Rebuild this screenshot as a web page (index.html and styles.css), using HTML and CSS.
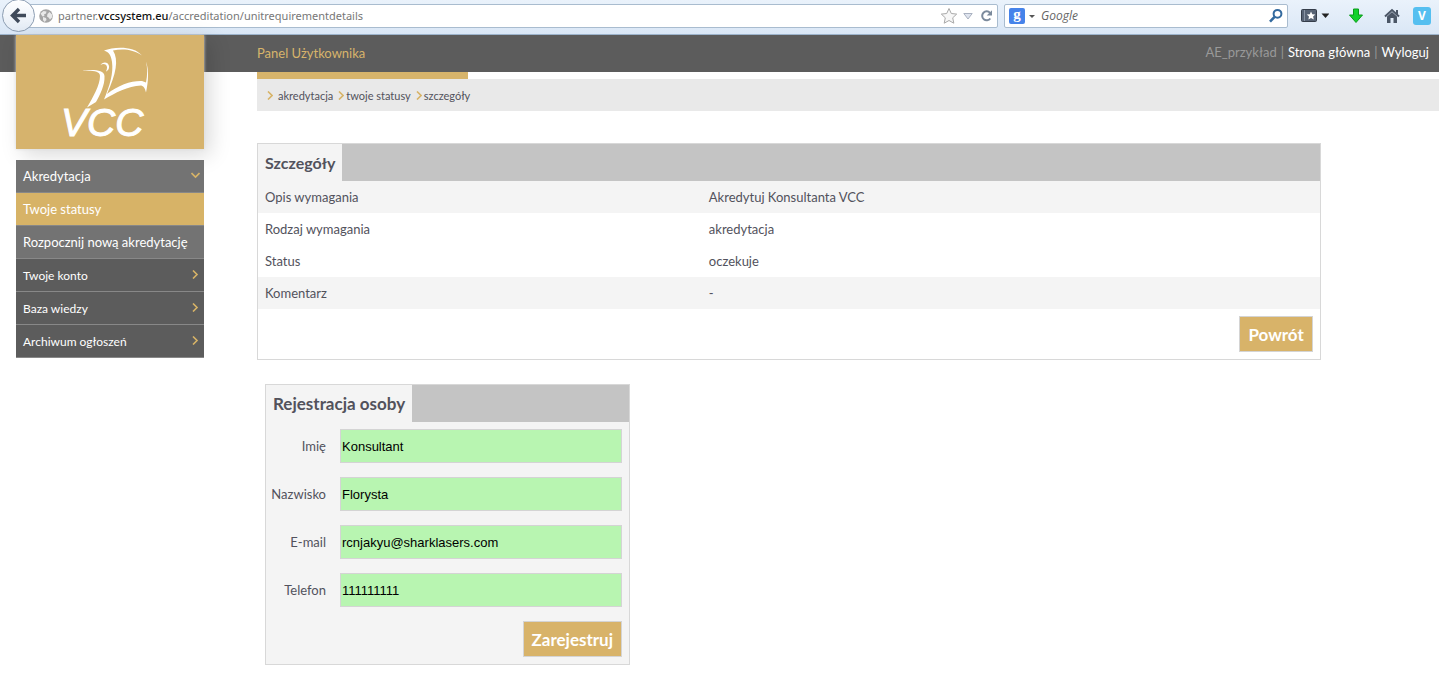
FILE: index.html
```html
<!DOCTYPE html>
<html lang="pl">
<head>
<meta charset="utf-8">
<title>VCC – Panel Użytkownika</title>
<link rel="stylesheet" href="styles.css">
</head>
<body>
<div class="browser">
  <button class="back" aria-label="Wstecz">
    <svg width="31" height="31" viewBox="0 0 31 31"><path d="M23 15.500H10M16 9l-6.500 6.500L16 22" fill="none" stroke="#3f4a5a" stroke-width="3.400"/></svg>
  </button>
  <div class="address">
    <svg class="globe" width="14" height="14" viewBox="0 0 14 14"><circle cx="7" cy="7" r="6.800" fill="#a5a5a5"/><path d="M1.500 4.500l3-2.500 3 .5-.5 2-2 1 .5 1.500-2 .5zM8.500 5l2-2 2.500 2.500v3l-2 2-1.500-2-1.500-1zM4 8l3 1 .5 2-2 2-1.500-2z" fill="#e9e9e9"/></svg>
    <div class="url">partner.<b>vccsystem.eu</b>/accreditation/unitrequirementdetails</div>
    <svg width="18" height="18" viewBox="0 0 18 18"><path d="M9 1.500l2.300 5 5.400.6-4 3.700 1.100 5.400L9 13.500l-4.800 2.700 1.100-5.400-4-3.700 5.400-.6z" fill="#f7f7f7" stroke="#a9a9a9"/></svg>
    <svg class="drop" width="10" height="18" viewBox="0 0 10 18"><path d="M.8 6.500h8.400L5 12z" fill="#dfe4ee" stroke="#a9b1c0"/></svg>
    <svg width="13" height="18" viewBox="0 0 13 18"><path d="M10 5.800A4.500 4.500 0 1 0 10.300 11.500" fill="none" stroke="#7b8a9c" stroke-width="2"/><path d="M12 3.200v5.300H6.700z" fill="#7b8a9c"/></svg>
  </div>
  <div class="search">
    <span class="engine">g</span>
    <svg width="6" height="16" viewBox="0 0 6 16"><path d="M0 7h6L3 10z" fill="#555"/></svg>
    <input class="query" type="text" placeholder="Google" aria-label="Google">
    <svg width="14" height="16" viewBox="0 0 14 16"><circle cx="8.500" cy="5.800" r="3.900" fill="none" stroke="#336a9f" stroke-width="2"/><path d="M5.600 8.800L1 13.700" stroke="#336a9f" stroke-width="2.600"/></svg>
  </div>
  <div class="tools">
    <svg width="28" height="18" viewBox="0 0 28 18"><rect x=".5" y="2.500" width="15" height="12" rx="1" fill="#566274" stroke="#353d4a"/><path d="M3.500 3v11" stroke="#8a95a5"/><path d="M10 4.500l1.300 2.700 3 .3-2.200 2 .7 3-2.800-1.500-2.600 1.500.6-3-2.200-2 3-.3z" fill="#fff"/><path d="M20.500 6.500h8L24.500 11z" fill="#222"/></svg>
    <svg class="down" width="14" height="18" viewBox="0 0 14 18"><path d="M4.500 2h5v6h4L7 15.500.5 8h4z" fill="#12d12b" stroke="#0a9c1b"/></svg>
    <svg class="home" width="16" height="18" viewBox="0 0 16 18"><path d="M1 9.500L8 3l7 6.500" fill="none" stroke="#4b5666" stroke-width="2"/><path d="M12 3h2v5l-2-2zM3 9.500l5-4.500 5 4.500V16H9.500v-5h-3v5H3z" fill="#4b5666"/></svg>
    <span class="addon">V</span>
  </div>
</div>

<header class="top">
  <div class="panel-name">Panel Użytkownika</div>
  <nav class="user"><span>AE_przykład</span><span>|</span><a href="#">Strona główna</a><span>|</span><a href="#">Wyloguj</a></nav>
</header>

<div class="layout">
  <aside class="sidebar">
    <a class="logo" href="#" aria-label="VCC">
      <svg width="188" height="114" viewBox="0 0 188 114">
        <g fill="#fff">
          <path d="M66 36C74 34.500 88 34 88.500 41 89 50 84 60 80 67L71 72.500C77 62 84 50 84 41 84 35.500 75 35.500 66 36z"/>
          <path d="M84.500 30C86 27 92 26 93 31 93.500 34 91.500 36 90 36.500 91.500 33 91.500 31 89.500 29.500 88 28.500 86 29 84.500 30z"/>
          <path d="M88 15.500C98 11.500 118 10.500 126 20.500 117 14 106 13.500 97 15.500 103 25 100 39 91 59 102 50 116 45.500 126 46L130 47.500C131.500 40 131.500 33 130 26.500 133 35 132.500 46 130 57.500 129 53 127.500 51 125 50.500 112 51 99 58 88 64.500 94 50 97.500 38 96 27 95 20 93 17 88 15.500z"/>
        </g>
        <text class="logo-text" x="45" y="101">VCC</text>
      </svg>
    </a>
    <nav class="menu">
      <a class="open" href="#">Akredytacja<svg width="9" height="9" viewBox="0 0 9 9"><path d="M.5 2l4 4 4-4"/></svg></a>
      <a class="current" href="#">Twoje statusy</a>
      <a class="open" href="#">Rozpocznij nową akredytację</a>
      <a class="closed" href="#">Twoje konto<svg width="9" height="9" viewBox="0 0 9 9"><path d="M2 .5l4 4-4 4"/></svg></a>
      <a class="closed" href="#">Baza wiedzy<svg width="9" height="9" viewBox="0 0 9 9"><path d="M2 .5l4 4-4 4"/></svg></a>
      <a class="closed" href="#">Archiwum ogłoszeń<svg width="9" height="9" viewBox="0 0 9 9"><path d="M2 .5l4 4-4 4"/></svg></a>
    </nav>
  </aside>

  <main class="content">
    <div class="accent"></div>
    <nav class="crumbs">
      <svg width="6" height="9" viewBox="0 0 6 9"><path d="M1 .5l4 4-4 4"/></svg><a class="first" href="#">akredytacja</a>
      <svg width="6" height="9" viewBox="0 0 6 9"><path d="M1 .5l4 4-4 4"/></svg><a href="#">twoje statusy</a>
      <svg width="6" height="9" viewBox="0 0 6 9"><path d="M1 .5l4 4-4 4"/></svg><a href="#">szczegóły</a>
    </nav>

    <section class="box details">
      <div class="box-head"><h2>Szczegóły</h2></div>
      <table>
        <tr class="shade"><th scope="row">Opis wymagania</th><td>Akredytuj Konsultanta VCC</td></tr>
        <tr><th scope="row">Rodzaj wymagania</th><td>akredytacja</td></tr>
        <tr><th scope="row">Status</th><td>oczekuje</td></tr>
        <tr class="shade"><th scope="row">Komentarz</th><td>-</td></tr>
      </table>
      <div class="actions"><button class="btn" type="button">Powrót</button></div>
    </section>

    <form class="box register">
      <div class="box-head"><h2>Rejestracja osoby</h2></div>
      <div class="fields">
        <label for="first">Imię</label><input id="first" type="text" value="Konsultant">
        <label for="last">Nazwisko</label><input id="last" type="text" value="Florysta">
        <label for="mail">E-mail</label><input id="mail" type="text" value="rcnjakyu@sharklasers.com">
        <label for="phone">Telefon</label><input id="phone" type="text" value="111111111">
      </div>
      <div class="actions"><button class="btn" type="button">Zarejestruj</button></div>
    </form>
  </main>
</div>
</body>
</html>
```
FILE: styles.css
```css
* { box-sizing: border-box; }
body {
  margin: 0;
  background: #fff;
  color: #52525c;
  font: 13px/20px Lato, "Open Sans", sans-serif;
}
a { color: inherit; text-decoration: none; }
svg { display: block; flex: none; }

.browser {
  display: flex;
  align-items: center;
  height: 35px;
  padding: 0 8px 3px 2px;
  background: linear-gradient(#eaf2fb, #dae7f6);
  border-bottom: 1px solid #9db4cc;
}
.back {
  position: relative;
  flex: none;
  width: 33px;
  height: 33px;
  margin-right: -16px;
  padding: 0;
  border: 1px solid #8c9db2;
  border-radius: 50%;
  background: linear-gradient(#fff, #e3ebf5);
}
.address, .search {
  display: flex;
  align-items: center;
  height: 24px;
  border: 1px solid #a9bccf;
  border-radius: 2px;
  background: #fff;
}
.address { flex: 1; padding: 0 4px 0 19px; }
.url {
  flex: 1;
  margin-left: 5px;
  color: #777;
  font: 11px/20px "Noto Sans", sans-serif;
}
.url b { color: #111; font-weight: 500; }
.drop { margin: 0 7px 0 5px; }
.search { width: 284px; margin-left: 6px; padding: 0 4px; }
.engine {
  width: 16px;
  height: 16px;
  margin-right: 4px;
  border-radius: 2px;
  background: #4683ea;
  color: #fff;
  font: bold 15px/12px "Liberation Serif", serif;
  text-align: center;
}
.query {
  flex: 1;
  min-width: 0;
  margin-left: 6px;
  padding: 0;
  border: 0;
  font: italic 12px/20px "Open Sans", sans-serif;
}
.query::placeholder { color: #666; }
.tools { display: flex; align-items: center; margin-left: 13px; }
.down { margin-left: 20px; }
.home { margin: 0 13px 0 21px; }
.addon {
  width: 18px;
  height: 18px;
  border-radius: 3px;
  background: #55bff0;
  color: #fff;
  font: bold 12px/18px "Open Sans", sans-serif;
  text-align: center;
}

.top {
  display: flex;
  justify-content: space-between;
  height: 37px;
  padding: 0 10px 0 257px;
  background: #5c5c5c;
}
.panel-name { color: #d7b46b; line-height: 37px; }
.user { display: flex; gap: 4px; color: #fff; line-height: 34px; }
.user span { color: #999; }

.layout { display: flex; }
.sidebar { flex: none; width: 257px; padding: 0 53px 0 16px; }
.logo {
  display: block;
  position: relative;
  height: 114px;
  margin-top: -37px;
  background: #d6b36d;
  box-shadow: 0 0 3px #ddd, 6px 6px 20px rgba(0, 0, 0, .15);
}
.logo-text {
  fill: #fff;
  stroke: #fff;
  font: italic 39px "Liberation Sans", sans-serif;
}
.menu { position: relative; margin-top: 11px; }
.menu a {
  display: flex;
  justify-content: space-between;
  height: 33px;
  padding: 0 4px 0 7px;
  border-bottom: 1px solid #888;
  background: #5c5c5c;
  color: #fff;
  line-height: 33px;
  white-space: nowrap;
}
.menu a.open { background: #737373; }
.menu a.current { background: #d7b367; }
.menu a.closed { font-size: 12px; }
.menu svg { margin-top: 11px; }
.menu path, .crumbs path { fill: none; stroke: #d7b367; stroke-width: 1.6; }

.content { flex: 1; min-width: 0; }
.accent { width: 211px; height: 7px; background: #d7b46b; }
.crumbs {
  display: flex;
  align-items: center;
  height: 32px;
  padding: 0 10px;
  background: #e9e9e9;
  font-size: 11px;
}
.crumbs a { margin: 2px 5px 0 2px; }
.crumbs .first { margin-left: 5px; }

.box { border: 1px solid #d8d8d8; }
.details { width: 90%; margin-top: 32px; }
.box-head { display: flex; height: 37px; background: #c4c4c4; }
.box-head h2 {
  margin: 0;
  padding: 0 7px;
  background: #f4f4f4;
  font-size: 16px;
  line-height: 38px;
}
table { width: 100%; border-collapse: collapse; }
th, td {
  height: 32px;
  padding: 0 7px;
  font-weight: normal;
  text-align: left;
}
th { width: 41.8%; }
.shade { background: #f4f4f4; }
.actions { display: flex; justify-content: flex-end; padding: 7px; }
.btn {
  height: 36px;
  padding: 2px 8px 0;
  border: 1px solid #d4d4d4;
  background: #d8b369;
  color: #fff;
  font: bold 17px/20px Lato, sans-serif;
}

.register { width: 365px; margin: 24px 0 0 8px; background: #f4f4f4; }
.register h2 { font-size: 17px; }
.fields {
  display: grid;
  grid-template-columns: auto 282px;
  gap: 14px;
  align-items: center;
  justify-content: end;
  padding: 7px;
}
.fields label { text-align: right; }
.fields input {
  width: 100%;
  height: 34px;
  padding: 0 1px;
  border: 1px solid #d4d4d4;
  background: #b8f5b1;
  color: #000;
  font: 13px "Liberation Sans", sans-serif;
}
```
